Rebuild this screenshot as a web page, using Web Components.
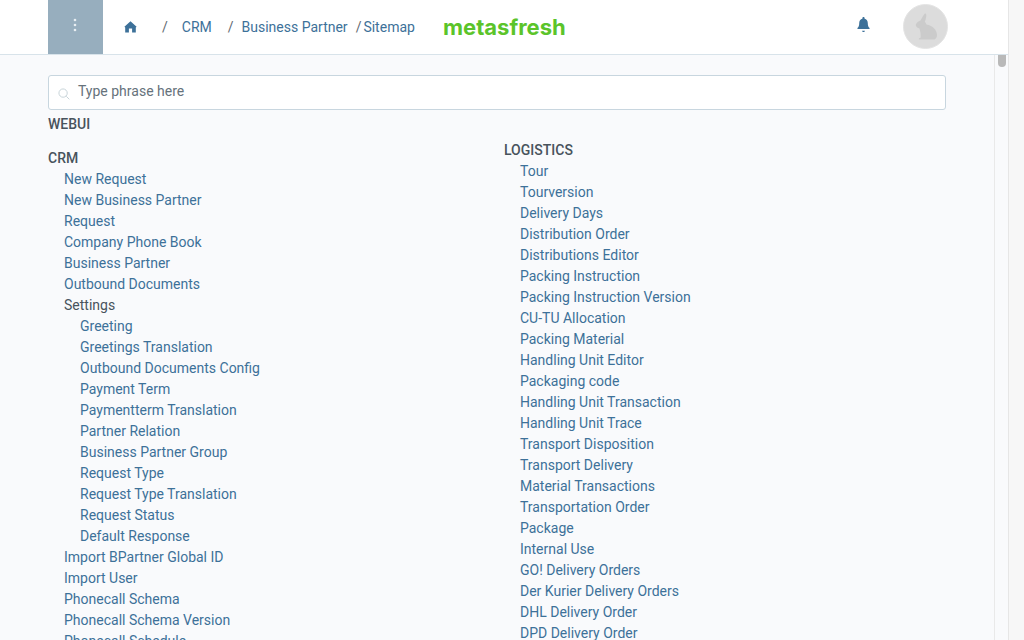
<!DOCTYPE html>
<html lang="en"><head><meta charset="utf-8"><title>Sitemap</title>
<style>
html,body{margin:0;padding:0;height:100%;overflow:hidden;background:#f9fafc}
body{font:14px/21px Roboto,sans-serif}
</style></head><body>
<app-shell>
  <top-bar slot="top"></top-bar>
  <phrase-search></phrase-search>
  <div style="font-weight:500;color:#48535c;height:21px;line-height:21px;margin-top:4px">WEBUI</div>
  <menu-columns>
    <menu-group slot="left" title-text="CRM" style="margin-top:13px" items="New Request|New Business Partner|Request|Company Phone Book|Business Partner|Outbound Documents|#Settings|>Greeting|>Greetings Translation|>Outbound Documents Config|>Payment Term|>Paymentterm Translation|>Partner Relation|>Business Partner Group|>Request Type|>Request Type Translation|>Request Status|>Default Response|Import BPartner Global ID|Import User|Phonecall Schema|Phonecall Schema Version|Phonecall Schedule"></menu-group>
    <menu-group slot="right" title-text="LOGISTICS" style="margin-top:5px" items="Tour|Tourversion|Delivery Days|Distribution Order|Distributions Editor|Packing Instruction|Packing Instruction Version|CU-TU Allocation|Packing Material|Handling Unit Editor|Packaging code|Handling Unit Transaction|Handling Unit Trace|Transport Disposition|Transport Delivery|Material Transactions|Transportation Order|Package|Internal Use|GO! Delivery Orders|Der Kurier Delivery Orders|DHL Delivery Order|DPD Delivery Order"></menu-group>
  </menu-columns>
</app-shell>
<script>
function def(name,html,init){customElements.define(name,class extends HTMLElement{connectedCallback(){if(this.shadowRoot)return;const r=this.attachShadow({mode:'open'});r.innerHTML=html;if(init)init.call(this,r)}})}
def('app-shell',`<style>
:host{display:flex;width:1024px;height:640px;overflow:hidden}
.page{width:1008px;height:640px;display:flex;flex-direction:column;flex:none}
.below{flex:1;display:flex;min-height:0}
.content{flex:1;min-width:0;overflow:hidden;padding:20px 48px 0 48px;box-sizing:border-box}
.track{width:14px;flex:none;background:#f9fafc;border-left:1px solid #e9e9e9;box-sizing:border-box;padding-left:3px}
.thumb{width:8px;height:12px;background:#b9b9b9;border-radius:0 0 4px 4px}
.strip{width:16px;flex:none;background:#f7f7f7;border-left:1px solid #e6e6e6;box-sizing:border-box}
</style>
<div class="page"><slot name="top"></slot><div class="below"><div class="content"><slot></slot></div><div class="track"><div class="thumb"></div></div></div></div><div class="strip"></div>`);
def('top-bar',`<style>
:host{display:flex;align-items:stretch;height:55px;box-sizing:border-box;background:#fff;border-bottom:1px solid #d8e3ea;padding:0 60px 0 48px;color:#3d7199;flex:none}
.menu{width:55px;background:#97aebe;display:flex;align-items:center;justify-content:center;margin-bottom:-1px;height:54px}
.menu svg{margin:0 1px 4px 0}
.crumbs{display:flex;align-items:center;white-space:nowrap;margin-left:21px;flex:none;width:299px;box-sizing:border-box}
.crumbs svg{display:block}
.home{width:13px}
.sep{color:#5f6a72}
.logo{font:700 22px/54px Inter,sans-serif;color:#5bc42a;letter-spacing:0;margin-left:20px;width:133px;flex:none;white-space:nowrap}
.space{flex:1}
.bell{display:flex;align-items:center;margin-right:33px;padding-bottom:5px}
.ava{align-self:center;width:45px;height:45px;border-radius:50%;background:#dcdcdc;border:1px solid #e4e4e4;box-sizing:border-box;margin-top:-2px;display:flex;align-items:center;justify-content:center}
</style>
<div class="menu"><svg width="4" height="14" viewBox="0 0 4 14" fill="#e8eef2"><circle cx="2" cy="2" r="1.3"/><circle cx="2" cy="7" r="1.3"/><circle cx="2" cy="12" r="1.3"/></svg></div>
<div class="crumbs">
<svg class="home" width="13" height="12" viewBox="0 0 13 12" fill="#3d7199"><path d="M6.5.3 12.6 5.700 11.800 6.600V11.600H8.100V7.600H4.900V11.600H1.200V6.600L.4 5.700z"/></svg>
<span class="sep" style="margin-left:25px">/</span><span style="margin-left:14px">CRM</span><span class="sep" style="margin-left:16px">/</span><span style="margin-left:8px">Business Partner</span><span class="sep" style="margin-left:8px">/</span><span style="margin-left:2px">Sitemap</span>
</div>
<div class="logo">metasfresh</div><div class="space"></div>
<div class="bell"><svg width="13" height="15" viewBox="0 0 14 16" fill="#3d7199"><path d="M7 0c.7 0 1.200.5 1.200 1.200v.5c2.200.5 3.400 2.300 3.400 4.600 0 3 .7 4.300 1.900 5.600v1H.5v-1c1.200-1.300 1.900-2.600 1.900-5.600 0-2.300 1.200-4.100 3.400-4.600v-.5C5.800.5 6.300 0 7 0zM5.500 14.600h3c0 .8-.7 1.400-1.500 1.400s-1.500-.6-1.500-1.400z"/></svg></div>
<div class="ava"><svg width="24" height="27" viewBox="0 0 24 27" fill="#cbcbcb"><path d="M11 .5C12.500 0 12.500 3 12 5 11.700 6.500 11.300 7.500 10.800 8.500 11.500 9.500 12 10.500 12.500 11.500 18 12.500 23 16.500 23 22 23 24 22 25.500 20.500 26.500L5 26.500C4.500 25.500 5.500 25 6.500 24.800 7 22 6.500 19 5.500 15.500 3.500 15 1.500 13.500 1.800 11.800 2.200 10 4.200 8 6.500 7.500 8 5 9.500 1.500 11 .5z"/></svg></div>`);
def('phrase-search',`<style>
:host{display:flex;align-items:center;height:35px;box-sizing:border-box;background:#fff;border:1px solid #c8d6df;border-radius:3px;width:898px;padding-left:9px;color:#66727b}
svg{margin-right:8px;margin-top:2px}
</style><svg width="12" height="12" viewBox="0 0 13 13" fill="none" stroke="#c3d0d6" stroke-width="1"><circle cx="5.500" cy="5.500" r="4.500"/><path d="M9 9l3.300 3.300"/></svg><span style="margin-top:-2px">Type phrase here</span>`);
def('menu-columns',`<style>
:host{display:grid;grid-template-columns:456px 1fr}
</style><div><slot name="left"></slot></div><div><slot name="right"></slot></div>`);
def('menu-group',`<style>
:host{display:block}
.t{font-weight:500;color:#48535c}
.i{padding-left:16px;color:#3d7199;white-space:nowrap}
.s{color:#48535c}
.n{padding-left:32px}
</style><div class="t"></div><div class="l"></div>`,function(r){
r.querySelector('.t').textContent=this.getAttribute('title-text');
const l=r.querySelector('.l');
for(let x of this.getAttribute('items').split('|')){const d=document.createElement('div');d.className='i';
if(x[0]=='#'){d.className+=' s';x=x.slice(1)}else if(x[0]=='>'){d.className+=' n';x=x.slice(1)}
d.textContent=x;l.append(d)}
});
</script></body></html>
